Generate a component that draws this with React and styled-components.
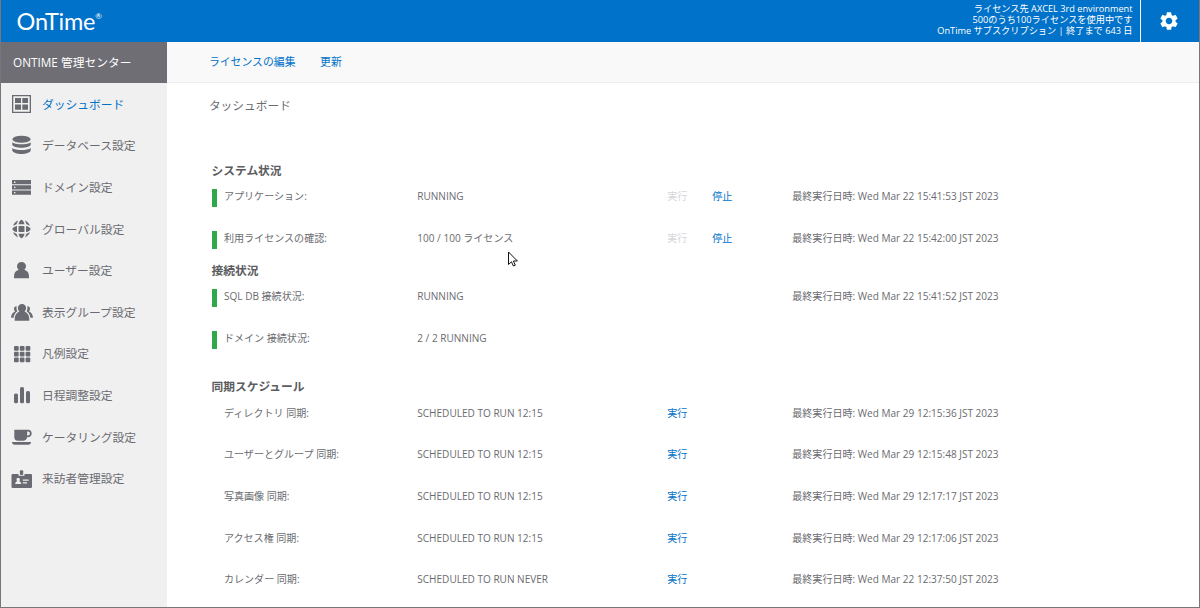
import React from "react";
import styled, { createGlobalStyle } from "styled-components";
import { MdSettings } from "react-icons/md";

const GlobalStyle = createGlobalStyle`
  * { box-sizing: border-box; }
  body {
    margin: 0;
    overflow: hidden;
    color: #6a6b70;
    background: #fff;
    font-family: "Open Sans", "Noto Sans CJK JP", sans-serif;
  }
`;

const Window = styled.div`
  position: relative;
  display: flex;
  flex-direction: column;
  height: 608px;
  border: solid #77777b;
  border-width: 0 1px 1px;
  overflow: hidden;
`;

const Header = styled.header`
  display: flex;
  flex: none;
  align-items: stretch;
  justify-content: space-between;
  height: 41.5px;
  background: #0072c9;
  color: #fff;
`;

const Logo = styled.div`
  display: flex;
  align-items: flex-start;
  padding: 6px 0 0 15.5px;
  font: 400 23.5px/30px Lato, sans-serif;
  letter-spacing: -0.2px;
`;

const Registered = styled.span`
  padding-top: 5px;
  font: 400 8px/10px Lato, sans-serif;
`;

const HeaderRight = styled.div`
  display: flex;
`;

const License = styled.div`
  padding: 3px 7.5px 0 0;
  font-size: 9.2px;
  line-height: 11px;
  text-align: right;
  white-space: nowrap;
`;

const SettingsButton = styled.button`
  display: flex;
  align-items: center;
  justify-content: center;
  width: 59px;
  padding: 0 3px 0 0;
  border: 0;
  border-left: 1px solid #fff;
  background: none;
  color: #fff;
  font-size: 22px;
`;

const Body = styled.div`
  display: flex;
  flex: 1;
  min-height: 0;
`;

const Sidebar = styled.nav`
  flex: none;
  width: 166.4px;
  background: #f0f0f0;
`;

const SidebarTitle = styled.div`
  height: 41.5px;
  padding-left: 12px;
  background: #6e6e74;
  color: #fff;
  font-size: 11.75px;
  line-height: 41.5px;
`;

const NavItem = styled.a`
  display: flex;
  align-items: center;
  gap: 8px;
  height: 41.67px;
  padding-left: 9px;
  color: ${(p) => (p.$active ? "#0072c9" : "#6a6b70")};
  font-size: 11.77px;
  white-space: nowrap;
`;

const NavLabel = styled.span`
  padding-bottom: 1.6px;
`;

const NavIcon = styled.svg`
  flex: none;
  width: 24px;
  height: 24px;
  fill: #6a6b72;
`;

const Main = styled.main`
  flex: 1;
  min-width: 0;
`;

const Toolbar = styled.div`
  display: flex;
  gap: 24.5px;
  height: 41.5px;
  padding-left: 41.5px;
  border-bottom: 1px solid #eee;
  background: #f9f9f9;
  line-height: 39.5px;
`;

const ToolLink = styled.a`
  color: #0072c9;
  font-size: 10.87px;
`;

const PageTitle = styled.h1`
  margin: 0;
  padding: 13.5px 0 0 41.5px;
  font-size: 11.72px;
  font-weight: 400;
  line-height: 16.67px;
`;

const Sections = styled.div`
  padding: 48.4px 0 0 44.2px;
`;

const Section = styled.section`
  margin-bottom: ${(p) => p.$gap || 0}px;
`;

const SectionTitle = styled.h2`
  margin: 0 0 9.8px;
  color: #5b5c60;
  font-size: 11.72px;
  font-weight: 600;
  line-height: 16.67px;
`;

const Rows = styled.div`
  display: grid;
  row-gap: 25px;
`;

const Row = styled.div`
  display: grid;
  grid-template-columns: 12.4px 193.3px 250px 45px 80px 1fr;
  height: 16.67px;
  font-size: 10.05px;
  line-height: 16.67px;
  white-space: nowrap;
`;

const StatusBar = styled.span`
  width: 5px;
  height: 18px;
  margin-top: 1px;
  background: ${(p) => (p.$on ? "#2fa84a" : "transparent")};
`;

const Action = styled.a`
  color: ${(p) => (p.$disabled ? "#d6d6d8" : "#0072c9")};
`;

const Pointer = styled.svg`
  position: absolute;
  left: 506px;
  top: 251px;
  width: 12px;
  height: 18px;
`;

const icons = {
  dashboard: (
    <>
      <path fillRule="evenodd" d="M2 3h19v18H2zM3.300 4.300v15.400h16.400V4.300z" />
      <path d="M5 6h6v5H5zM12.300 6h5.700v5h-5.700zM5 12.500h6v5.200H5zM12.300 12.500h5.700v5.200h-5.700z" />
    </>
  ),
  database: (
    <>
      <ellipse cx="11.500" cy="6.200" rx="9.200" ry="3.500" />
      <path d="M2.300 9.200c3 2.800 15.400 2.800 18.400 0v2.500c-1 4-17.400 4-18.400 0z" />
      <path d="M2.300 15c3 2.800 15.400 2.800 18.400 0v2.500c-1 4.600-17.400 4.600-18.400 0z" />
    </>
  ),
  domain: (
    <path
      fillRule="evenodd"
      d="M2 5h19v4.300H2zM2 10.300h19v4.200H2zM2 15.500h19v4.200H2zM4 6.500v1.400h1.400V6.500zM4 11.700v1.400h1.400v-1.400zM4 16.900v1.400h1.400v-1.400z"
    />
  ),
  globe: (
    <>
      <rect x="8.500" y="8.900" width="6" height="6.200" rx="0.800" />
      <path d="M8.500 7.300C8.900 4.900 10.200 3.100 11.500 2.700c1.300.4 2.600 2.200 3 4.600zM8.500 16.700h6c-.4 2.400-1.700 4.200-3 4.600-1.300-.4-2.600-2.200-3-4.600zM7 8.900v6.200c-2.500-.4-4.300-1.700-4.700-3.100.4-1.400 2.200-2.700 4.700-3.100zM16 8.900c2.500.4 4.300 1.700 4.700 3.100-.4 1.400-2.200 2.700-4.700 3.100z" />
      <path d="M8.100 3.600 6.500 7.200 3.100 8.700C3.900 6.400 5.900 4.400 8.100 3.600zM14.900 3.600c2.200.8 4.200 2.800 5 5.100l-3.400-1.500zM3.100 15.300l3.400 1.500 1.600 3.600C5.900 19.600 3.900 17.600 3.100 15.300zM19.900 15.300c-.8 2.300-2.800 4.300-5 5.100l1.600-3.600z" />
    </>
  ),
  user: (
    <path d="M11.500 4c2.700 0 4.500 1.800 4.500 4.200 0 1.500-.7 2.700-1.700 3.600 3 1.100 4.700 3 4.700 6.500v1.900H4v-1.900c0-3.500 1.700-5.400 4.700-6.500C7.700 10.900 7 9.700 7 8.200 7 5.800 8.800 4 11.500 4z" />
  ),
  group: (
    <>
      <path d="M12 4c2.500 0 4.100 1.700 4.100 4 0 1.500-.6 2.600-1.500 3.500 3.200 1.300 4.700 4 4.700 7.500v1.700H4.700V19c0-3.500 1.500-6.200 4.700-7.500C8.500 10.600 7.900 9.500 7.900 8c0-2.300 1.600-4 4.100-4z" />
      <path d="M6.700 6.200C5.100 5.900 4 7.200 4 8.800c0 1.200.4 2.100 1 2.700-2.500 1.200-3.800 3-4 6.300h2.600c.3-2.900 1.600-5.200 3.800-6.500-.8-1.300-1.100-3.300-.7-5.100zM17.300 6.200c1.600-.3 2.700 1 2.700 2.600 0 1.200-.4 2.100-1 2.700 2.500 1.200 3.800 3 4 6.300h-2.600c-.3-2.900-1.600-5.200-3.800-6.500.8-1.300 1.100-3.300.7-5.100z" />
    </>
  ),
  grid: [4, 9.8, 15.6].map((y) =>
    [4, 9.8, 15.6].map((x) => (
      <rect key={`${x}-${y}`} x={x} y={y} width="4.700" height="4.700" rx="1" />
    ))
  ),
  chart: (
    <>
      <rect x="4" y="10.500" width="4" height="9.800" rx="1.600" />
      <rect x="10" y="4" width="4" height="16.300" rx="1.600" />
      <rect x="16" y="8" width="4" height="12.300" rx="1.600" />
    </>
  ),
  cup: (
    <>
      <path
        fillRule="evenodd"
        d="M4.300 4.700h14c2 0 3.400 1.400 3.400 3.700s-1.600 3.900-4.200 3.900h-.5c-.2 2.300-1.600 3.400-3.600 3.400H7.900c-2.300 0-3.600-1.300-3.600-3.500zM17.200 6.500v4h.7c1.300 0 2-.8 2-2s-.7-2-1.900-2z"
      />
      <path d="M2 17h19c0 1.700-1.200 2.700-2.900 2.700H4.900C3.200 19.700 2 18.700 2 17z" />
    </>
  ),
  badge: (
    <>
      <path
        fillRule="evenodd"
        d="M3 7h5.500v1.800h6V7H20.500c.9 0 1.500.5 1.500 1.300v11.400c0 .8-.6 1.300-1.500 1.300H3c-.9 0-1.500-.5-1.500-1.300V8.300C1.500 7.500 2.100 7 3 7zM8.200 10.800c-1 0-1.700.7-1.700 1.700 0 .7.300 1.200.8 1.700-1.200.4-2.100 1.100-2.100 2.700h6c0-1.600-.9-2.300-2.100-2.700.5-.5.8-1 .8-1.700 0-1-.7-1.700-1.700-1.700zM12.800 12.500v1.200h5.800v-1.200zM12.800 15.200v1.200h4.200v-1.200z"
      />
      <rect x="9.900" y="3.300" width="3.300" height="4.600" rx="1" />
    </>
  ),
};

const navItems = [
  ["dashboard", "ダッシュボード"],
  ["database", "データベース設定"],
  ["domain", "ドメイン設定"],
  ["globe", "グローバル設定"],
  ["user", "ユーザー設定"],
  ["group", "表示グループ設定"],
  ["grid", "凡例設定"],
  ["chart", "日程調整設定"],
  ["cup", "ケータリング設定"],
  ["badge", "来訪者管理設定"],
];

const sections = [
  {
    title: "システム状況",
    gap: 15.2,
    rows: [
      { on: true, label: "アプリケーション:", status: "RUNNING", run: "off", stop: true, last: "Wed Mar 22 15:41:53 JST 2023" },
      { on: true, label: "利用ライセンスの確認:", status: "100 / 100 ライセンス", run: "off", stop: true, last: "Wed Mar 22 15:42:00 JST 2023" },
    ],
  },
  {
    title: "接続状況",
    gap: 31.8,
    rows: [
      { on: true, label: "SQL DB 接続状況:", status: "RUNNING", last: "Wed Mar 22 15:41:52 JST 2023" },
      { on: true, label: "ドメイン 接続状況:", status: "2 / 2 RUNNING" },
    ],
  },
  {
    title: "同期スケジュール",
    rows: [
      { label: "ディレクトリ 同期:", status: "SCHEDULED TO RUN 12:15", run: "on", last: "Wed Mar 29 12:15:36 JST 2023" },
      { label: "ユーザーとグループ 同期:", status: "SCHEDULED TO RUN 12:15", run: "on", last: "Wed Mar 29 12:15:48 JST 2023" },
      { label: "写真画像 同期:", status: "SCHEDULED TO RUN 12:15", run: "on", last: "Wed Mar 29 12:17:17 JST 2023" },
      { label: "アクセス権 同期:", status: "SCHEDULED TO RUN 12:15", run: "on", last: "Wed Mar 29 12:17:06 JST 2023" },
      { label: "カレンダー 同期:", status: "SCHEDULED TO RUN NEVER", run: "on", last: "Wed Mar 22 12:37:50 JST 2023" },
    ],
  },
];

export default function App() {
  return (
    <Window lang="ja">
      <GlobalStyle />
      <Header>
        <Logo>
          OnTime<Registered>®</Registered>
        </Logo>
        <HeaderRight>
          <License>
            <div>ライセンス先 AXCEL 3rd environment</div>
            <div>500のうち100ライセンスを使用中です</div>
            <div>OnTime サブスクリプション | 終了まで 643 日</div>
          </License>
          <SettingsButton aria-label="設定">
            <MdSettings />
          </SettingsButton>
        </HeaderRight>
      </Header>
      <Body>
        <Sidebar>
          <SidebarTitle>ONTIME 管理センター</SidebarTitle>
          {navItems.map(([icon, label], i) => (
            <NavItem key={icon} $active={i === 0}>
              <NavIcon viewBox="0 0 24 24">{icons[icon]}</NavIcon>
              <NavLabel>{label}</NavLabel>
            </NavItem>
          ))}
        </Sidebar>
        <Main>
          <Toolbar>
            <ToolLink>ライセンスの編集</ToolLink>
            <ToolLink>更新</ToolLink>
          </Toolbar>
          <PageTitle>タッシュボード</PageTitle>
          <Sections>
            {sections.map((s) => (
              <Section key={s.title} $gap={s.gap}>
                <SectionTitle>{s.title}</SectionTitle>
                <Rows>
                  {s.rows.map((r) => (
                    <Row key={r.label}>
                      <StatusBar $on={r.on} />
                      <span>{r.label}</span>
                      <span>{r.status}</span>
                      <Action $disabled={r.run === "off"}>{r.run && "実行"}</Action>
                      <Action>{r.stop && "停止"}</Action>
                      <span>{r.last && `最終実行日時: ${r.last}`}</span>
                    </Row>
                  ))}
                </Rows>
              </Section>
            ))}
          </Sections>
        </Main>
      </Body>
      <Pointer viewBox="0 0 12 18">
        <path
          d="M1.500 1v12.500l2.900-2.700 2 4.200 1.900-.8-1.900-4.200h4z"
          fill="#fff"
          stroke="#111"
          strokeWidth="1"
        />
      </Pointer>
    </Window>
  );
}
